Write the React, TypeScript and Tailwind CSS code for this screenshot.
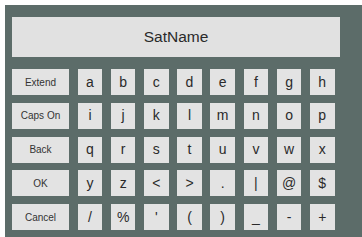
const rows: string[][] = [
  ["Extend", "a", "b", "c", "d", "e", "f", "g", "h"],
  ["Caps On", "i", "j", "k", "l", "m", "n", "o", "p"],
  ["Back", "q", "r", "s", "t", "u", "v", "w", "x"],
  ["OK", "y", "z", "<", ">", ".", "|", "@", "$"],
  ["Cancel", "/", "%", "'", "(", ")", "_", "-", "+"],
];

export default function App() {
  return (
    <div className="h-[237px] w-[362px] overflow-hidden bg-white pl-[5px] pt-[5px] font-['Liberation_Sans',Arial,sans-serif]">
      <div className="h-full w-full bg-[#5c6c69] pl-[7px] pt-[12px]">
        <div className="flex h-[40px] w-[328px] items-center justify-center bg-[#e1e1e1] text-[15.5px] text-[#2a2a2a]">
          SatName
        </div>
        <div className="mt-[12px] grid grid-cols-[57px_repeat(8,24.5px)] gap-x-[8.7px] gap-y-[7.75px]">
          {rows.map((row) =>
            row.map((key, i) => (
              <div
                key={row[0] + i}
                className={
                  i === 0
                    ? "flex h-[26px] items-center justify-center bg-[#e3e3e3] text-[10px] text-[#333]"
                    : "flex h-[26px] items-center justify-center bg-[#e3e3e3] text-[14px] text-[#2a2a2a]"
                }
              >
                {key}
              </div>
            )),
          )}
        </div>
      </div>
    </div>
  );
}
